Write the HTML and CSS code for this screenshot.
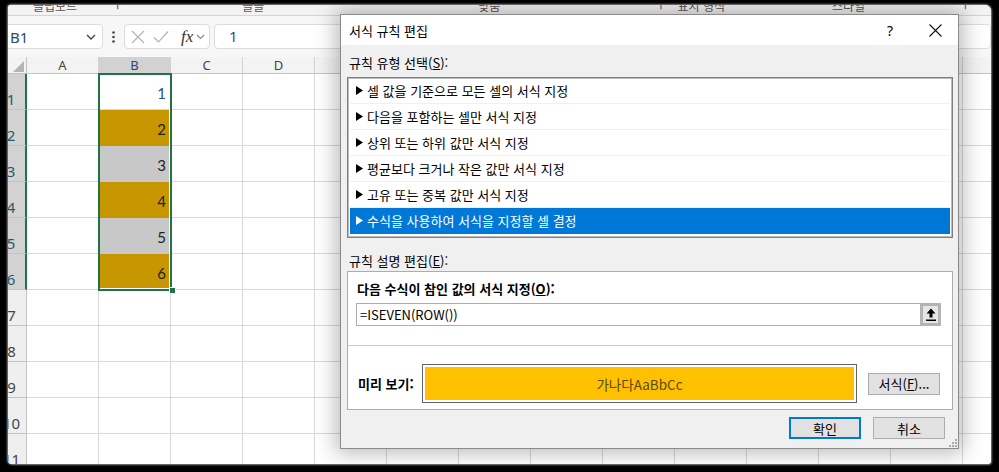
FILE: index.html
```html
<!DOCTYPE html>
<html lang="ko">
<head>
<meta charset="utf-8">
<title>서식 규칙 편집</title>
<link rel="stylesheet" href="styles.css">
</head>
<body>
<div class="shot">
  <div class="ribbon">
    <span class="r1">클립보드</span><span class="r2">ㄱ</span><span class="r3">글꼴</span><span class="r4">맞춤</span><span class="r5">ㄱ</span><span class="r6">표시 형식</span><span class="r7">스타일</span><span class="r8">ㄱ</span>
  </div>
  <div class="fbar">
    <div class="namebox"><span class="nb-text">B1</span>
      <svg class="chev" width="10" height="6" viewBox="0 0 10 6"><path d="M1 1 L5 5 L9 1" fill="none" stroke="#444" stroke-width="1.3"/></svg>
    </div>
    <div class="dots"><svg width="3" height="12" viewBox="0 0 3 12"><circle cx="1.5" cy="1.5" r="1.3" fill="#444"/><circle cx="1.5" cy="6" r="1.3" fill="#444"/><circle cx="1.5" cy="10.5" r="1.3" fill="#444"/></svg></div>
    <div class="fxbox">
      <svg width="14" height="14" viewBox="0 0 14 14"><path d="M1 1 L13 13 M13 1 L1 13" stroke="#b3b3b3" stroke-width="1.2" fill="none"/></svg>
      <svg width="16" height="14" viewBox="0 0 16 14"><path d="M1 7.5 L5.5 12 L15 1.5" stroke="#b3b3b3" stroke-width="1.2" fill="none"/></svg>
      <i class="fx">fx</i>
      <svg width="9" height="6" viewBox="0 0 9 6"><path d="M1 1 L4.5 4.5 L8 1" fill="none" stroke="#888" stroke-width="1.2"/></svg>
    </div>
    <div class="finput">1</div>
  </div>

  <div class="sheet">
    <div class="hdr">
      <div class="corner"><svg width="11" height="11" viewBox="0 0 11 11"><path d="M11 0 L11 11 L0 11 Z" fill="#b5b5b5"/></svg></div>
      <div class="ch">A</div><div class="ch sel-h">B</div><div class="ch">C</div><div class="ch">D</div><div class="hrest"></div>
    </div>
    <div class="row"><div class="rh on">1</div><div class="c"></div><div class="c num">1</div><div class="c"></div><div class="c"></div><div class="rest"></div></div>
    <div class="row"><div class="rh on">2</div><div class="c"></div><div class="c gold">2</div><div class="c"></div><div class="c"></div><div class="rest"></div></div>
    <div class="row"><div class="rh on">3</div><div class="c"></div><div class="c gray">3</div><div class="c"></div><div class="c"></div><div class="rest"></div></div>
    <div class="row"><div class="rh on">4</div><div class="c"></div><div class="c gold">4</div><div class="c"></div><div class="c"></div><div class="rest"></div></div>
    <div class="row"><div class="rh on">5</div><div class="c"></div><div class="c gray">5</div><div class="c"></div><div class="c"></div><div class="rest"></div></div>
    <div class="row"><div class="rh on">6</div><div class="c"></div><div class="c gold">6</div><div class="c"></div><div class="c"></div><div class="rest"></div></div>
    <div class="row"><div class="rh">7</div><div class="c"></div><div class="c"></div><div class="c"></div><div class="c"></div><div class="rest"></div></div>
    <div class="row"><div class="rh">8</div><div class="c"></div><div class="c"></div><div class="c"></div><div class="c"></div><div class="rest"></div></div>
    <div class="row"><div class="rh">9</div><div class="c"></div><div class="c"></div><div class="c"></div><div class="c"></div><div class="rest"></div></div>
    <div class="row"><div class="rh">10</div><div class="c"></div><div class="c"></div><div class="c"></div><div class="c"></div><div class="rest"></div></div>
    <div class="row"><div class="rh">11</div><div class="c"></div><div class="c"></div><div class="c"></div><div class="c"></div><div class="rest"></div></div>
    <div class="selection"></div>
    <div class="handle"></div>
  </div>

  <div class="dlg">
    <div class="tb">
      <span class="tt">서식 규칙 편집</span>
      <span class="help">?</span>
      <span class="close"><svg width="13" height="13" viewBox="0 0 13 13"><path d="M0.5 0.5 L12.5 12.5 M12.5 0.5 L0.5 12.5" stroke="#111" stroke-width="1.1" fill="none"/></svg></span>
    </div>
    <div class="body">
      <div class="lbl">규칙 유형 선택(<u>S</u>):</div>
      <div class="list">
        <div class="li"><svg class="tri" width="7" height="9" viewBox="0 0 7 9"><path d="M0 0 L7 4.5 L0 9 Z" fill="#000"/></svg>셀 값을 기준으로 모든 셀의 서식 지정</div>
        <div class="li"><svg class="tri" width="7" height="9" viewBox="0 0 7 9"><path d="M0 0 L7 4.5 L0 9 Z" fill="#000"/></svg>다음을 포함하는 셀만 서식 지정</div>
        <div class="li"><svg class="tri" width="7" height="9" viewBox="0 0 7 9"><path d="M0 0 L7 4.5 L0 9 Z" fill="#000"/></svg>상위 또는 하위 값만 서식 지정</div>
        <div class="li"><svg class="tri" width="7" height="9" viewBox="0 0 7 9"><path d="M0 0 L7 4.5 L0 9 Z" fill="#000"/></svg>평균보다 크거나 작은 값만 서식 지정</div>
        <div class="li"><svg class="tri" width="7" height="9" viewBox="0 0 7 9"><path d="M0 0 L7 4.5 L0 9 Z" fill="#000"/></svg>고유 또는 중복 값만 서식 지정</div>
        <div class="li active"><svg class="tri" width="7" height="9" viewBox="0 0 7 9"><path d="M0 0 L7 4.5 L0 9 Z" fill="#fff"/></svg>수식을 사용하여 서식을 지정할 셀 결정</div>
      </div>
      <div class="lbl lbl2">규칙 설명 편집(<u>E</u>):</div>
      <div class="desc">
        <div class="sec1">
          <div class="blbl">다음 수식이 참인 값의 서식 지정(<u>O</u>):</div>
          <div class="input">
            <span class="itext">=ISEVEN(ROW())</span>
            <span class="upbtn"><svg width="10" height="13" viewBox="0 0 10 13"><path d="M5 0.5 L9.5 5.5 L6.5 5.5 L6.5 9.5 L3.5 9.5 L3.5 5.5 L0.5 5.5 Z" fill="#000"/><rect x="0" y="11.5" width="10" height="1.5" fill="#000"/></svg></span>
          </div>
        </div>
        <div class="sec2">
          <div class="plbl">미리 보기:</div>
          <div class="pbox"><div class="pfill">가나다AaBbCc</div></div>
          <div class="btn fmt">서식(<u>F</u>)...</div>
        </div>
      </div>
      <div class="foot">
        <div class="btn ok">확인</div>
        <div class="btn">취소</div>
      </div>
    </div>
    <svg class="grip" width="9" height="9" viewBox="0 0 9 9"><g fill="#a8a8a8"><rect x="7" y="1" width="2" height="2"/><rect x="4" y="4" width="2" height="2"/><rect x="7" y="4" width="2" height="2"/><rect x="1" y="7" width="2" height="2"/><rect x="4" y="7" width="2" height="2"/><rect x="7" y="7" width="2" height="2"/></g></svg>
  </div>
</div>
</body>
</html>
```

FILE: styles.css
```css
html, body {
  margin: 0;
  background: #000;
}
body {
  width: 999px;
  height: 472px;
  overflow: hidden;
  padding: 5px 0 0 8px;
  box-sizing: border-box;
  font-family: "Noto Sans CJK KR", "Noto Sans", sans-serif;
}
.shot {
  position: relative;
  width: 983px;
  height: 459px;
  background: #fff;
  overflow: hidden;
  border-radius: 3px 6px 3px 4px;
  box-shadow: 0 0 2px 1px #8a8a8a;
}

/* ribbon remnants */
.ribbon {
  height: 10px;
  background: #f3f3f3;
  border-bottom: 1px solid #d4d4d4;
  overflow: hidden;
  display: flex;
  align-items: flex-start;
  font-size: 12px;
  color: #555;
}
.ribbon span { line-height: 12px; margin-top: -5px; white-space: nowrap; }
.r1 { margin-left: 25px; }
.r2 { margin-left: 32px; }
.r3 { margin-left: 122px; }
.r4 { margin-left: 214px; }
.r5 { margin-left: 152px; }
.r6 { margin-left: 14px; }
.r7 { margin-left: 107px; }
.r8 { margin-left: 92px; }

/* formula bar */
.fbar {
  height: 41px;
  background: #f7f7f7;
  display: flex;
  align-items: center;
}
.namebox {
  margin-left: -4px;
  width: 99px;
  height: 25px;
  box-sizing: border-box;
  background: #fff;
  border: 1px solid #dcdcdc;
  border-radius: 4px;
  display: flex;
  align-items: center;
  justify-content: space-between;
  padding: 0 6px 0 4px;
}
.nb-text {
  font: 15px "Noto Sans", sans-serif;
  color: #2f4a66;
  margin-left: 1px;
}
.dots {
  width: 21px;
  display: flex;
  justify-content: center;
}
.fxbox {
  width: 86px;
  height: 25px;
  box-sizing: border-box;
  background: #fff;
  border: 1px solid #dcdcdc;
  border-radius: 4px;
  display: flex;
  align-items: center;
  padding-left: 6px;
  gap: 8px;
}
.fx {
  font: italic 17px "Liberation Serif", serif;
  color: #333;
  margin-left: 4px;
  margin-right: -5px;
  line-height: 20px;
}
.finput {
  margin-left: 4px;
  flex: 1;
  height: 25px;
  box-sizing: border-box;
  background: #fff;
  border: 1px solid #dcdcdc;
  border-radius: 4px;
  font: 15px "Noto Sans", sans-serif;
  color: #2a5590;
  line-height: 23px;
  padding-left: 14px;
}

/* sheet */
.sheet {
  position: relative;
  margin-left: -11px;
}
.hdr {
  display: flex;
  height: 17px;
  box-sizing: border-box;
  background: #f3f3f3;
  border-bottom: 1px solid #c4c4c4;
}
.corner {
  width: 30px;
  box-sizing: border-box;
  border-right: 1px solid #c4c4c4;
  display: flex;
  align-items: flex-end;
  justify-content: flex-end;
  padding: 0 2px 1px 0;
}
.ch {
  width: 72px;
  box-sizing: border-box;
  border-right: 1px solid #d2d2d2;
  text-align: center;
  font: 13px "Noto Sans", sans-serif;
  line-height: 16px;
  color: #444;
}
.ch.sel-h { background: #d2d2d2; color: #1d4f6e; }
.hrest {
  flex: 1;
  background: repeating-linear-gradient(to right, transparent 0 71px, #d2d2d2 71px 72px);
}
.row {
  display: flex;
  height: 36px;
}
.rh {
  width: 30px;
  box-sizing: border-box;
  background: #efefef;
  border-right: 1px solid #c4c4c4;
  border-bottom: 1px solid #c4c4c4;
  display: flex;
  align-items: flex-end;
  justify-content: center;
  font: 15px "Noto Sans", sans-serif;
  line-height: 17px;
  padding-bottom: 1px;
  color: #444;
}
.rh.on {
  background: #d2d2d2;
  border-right: 2px solid #217346;
  color: #2e5866;
}
.c {
  width: 72px;
  box-sizing: border-box;
  border-right: 1px solid #d9d9d9;
  border-bottom: 1px solid #d9d9d9;
  display: flex;
  align-items: center;
  justify-content: flex-end;
  padding: 2px 4px 0 0;
  font: 15px Lato, "Noto Sans", sans-serif;
  color: #222;
}
.c.num { color: #24508c; }
.c.gold { background: #c89600; border-color: transparent; }
.c.gray { background: #c8c8c8; border-color: transparent; }
.rest {
  flex: 1;
  border-bottom: 1px solid #d9d9d9;
  background: repeating-linear-gradient(to right, transparent 0 71px, #d9d9d9 71px 72px);
}
.selection {
  position: absolute;
  left: 101px;
  top: 16px;
  width: 74px;
  height: 218px;
  box-sizing: border-box;
  border: 2px solid #217346;
  box-shadow: inset -1px -1px 0 0 #fff;
}
.handle {
  position: absolute;
  left: 172px;
  top: 230px;
  width: 5px;
  height: 5px;
  background: #217346;
  border: 1px solid #fff;
}

/* dialog */
.dlg {
  position: absolute;
  left: 332px;
  top: 9px;
  width: 619px;
  height: 435px;
  box-sizing: border-box;
  border: 1px solid #8a8a8a;
  background: #f0f0f0;
  box-shadow: 0 0 20px 4px rgba(0,0,0,0.28);
  font-size: 13px;
  color: #000;
}
.tb {
  height: 30px;
  background: #fff;
  display: flex;
  align-items: center;
  padding-left: 8px;
}
.tt { flex: 1; font-size: 13px; }
.help {
  width: 30px;
  text-align: center;
  margin-right: 8px;
  font: 14px "Noto Sans", sans-serif;
}
.close {
  width: 45px;
  display: flex;
  justify-content: center;
}
.body {
  padding: 0 5px 0 6px;
}
.lbl {
  padding-top: 9px;
  padding-left: 2px;
  line-height: 18px;
}
.lbl2 { padding-top: 14px; }
.list {
  margin-top: 5px;
  height: 161px;
  box-sizing: border-box;
  background: #fff;
  border: 1px solid #7f7f7f;
  box-shadow: inset 0 0 0 1px #bcbcbc;
  padding: 0 2px 3px 2px;
}
.li {
  height: 26px;
  box-sizing: border-box;
  display: flex;
  align-items: center;
  padding-left: 6px;
  border-bottom: 1px solid #f0f0f0;
  white-space: nowrap;
}
.li .tri { margin-right: 4px; }
.li.active {
  background: #0078d7;
  color: #fff;
  border-bottom-color: #0078d7;
}
.desc {
  margin-top: 1px;
  background: #fff;
  border: 1px solid #adadad;
}
.sec1 {
  padding: 8px 11px 19px 8px;
}
.blbl {
  font-weight: bold;
  line-height: 18px;
  padding-left: 1px;
}
.input {
  margin-top: 5px;
  height: 23px;
  box-sizing: border-box;
  border: 1px solid #adadad;
  display: flex;
  align-items: center;
}
.itext {
  flex: 1;
  padding-left: 3px;
  font-size: 13px;
}
.upbtn {
  width: 21px;
  height: 23px;
  margin: -1px -1px -1px 0;
  box-sizing: border-box;
  border: 3px solid #b4b4b4;
  background: #e6e6e6;
  display: flex;
  align-items: center;
  justify-content: center;
}
.sec2 {
  border-top: 1px solid #c8c8c8;
  padding: 18px 12px 6px 0;
  display: flex;
  align-items: center;
}
.plbl {
  width: 74px;
  box-sizing: border-box;
  padding-left: 10px;
  font-weight: bold;
}
.pbox {
  width: 435px;
  height: 39px;
  box-sizing: border-box;
  border: 1px solid #646464;
  padding: 2px;
  background: #fff;
}
.pfill {
  height: 100%;
  background: #ffc000;
  display: flex;
  align-items: center;
  justify-content: center;
  color: #5a4a10;
  font-size: 13.5px;
}
.btn {
  width: 72px;
  height: 22px;
  box-sizing: border-box;
  background: #e1e1e1;
  border: 1px solid #adadad;
  display: flex;
  align-items: center;
  justify-content: center;
  font-size: 13px;
}
.fmt { margin-left: 11px; }
.foot {
  display: flex;
  justify-content: flex-end;
  gap: 12px;
  margin-top: 7px;
  padding-right: 8px;
}
.btn.ok { border: 2px solid #0078d7; }
.grip {
  position: absolute;
  right: 1px;
  bottom: 1px;
}
```
